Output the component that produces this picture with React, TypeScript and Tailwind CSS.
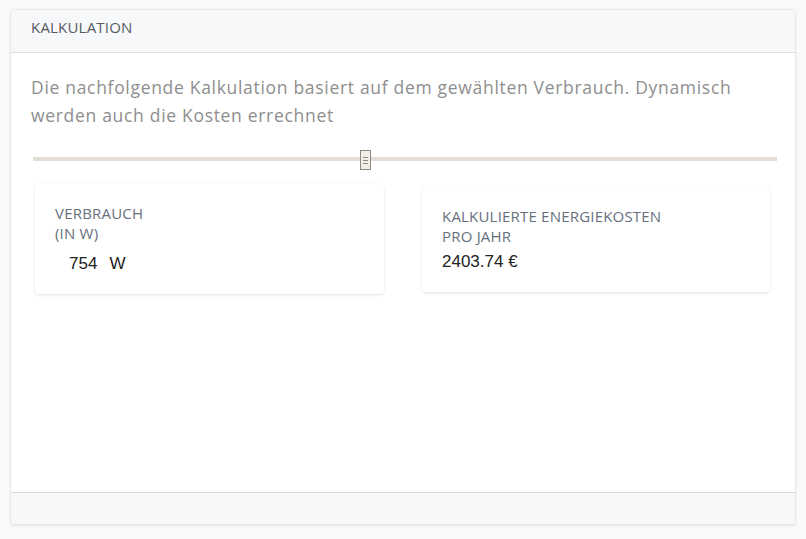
import React from 'react';

const SANS = "font-['Open_Sans',sans-serif]";
const NUM = "font-['Liberation_Sans',sans-serif]";

function StatCard({
  label,
  value,
  className,
}: {
  label: React.ReactNode;
  value: React.ReactNode;
  className?: string;
}) {
  return (
    <div
      className={`rounded-[4px] bg-white px-5 pt-[20px] shadow-[0_1px_3px_rgba(0,0,0,0.12)] ${className ?? ''}`}
    >
      <div className={`text-[15px] uppercase leading-[19.5px] tracking-[0.2px] text-[#66707c] ${SANS}`}>
        {label}
      </div>
      {value}
    </div>
  );
}

export default function App() {
  const consumption = 754;
  const yearly = 2403.74;

  return (
    <div className="min-h-[539px] bg-[#f9f9f9] px-[10px] pt-[9px]">
      <div className="flex h-[516px] flex-col overflow-hidden rounded-[4px] border border-[#e8e8e8] bg-white shadow-[0_1px_2px_rgba(0,0,0,0.08)]">
        <div className="flex h-[43px] items-start border-b border-[#dcdcdc] bg-[#f7f8fa] px-5 pt-[6px]">
          <span className={`text-[15px] leading-[22px] tracking-[0.2px] text-[#555a60] ${SANS}`}>
            KALKULATION
          </span>
        </div>

        <div className="flex-1 px-5 pt-[20px]">
          <p
            className={`max-w-[740px] text-[17.5px] leading-[28px] tracking-[0.69px] text-[#8e8e8e] ${SANS}`}
          >
            Die nachfolgende Kalkulation basiert auf dem gewählten Verbrauch. Dynamisch werden auch
            die Kosten errechnet
          </p>

          {/* range slider */}
          <div className="relative ml-[2px] mt-[21px] h-[20px] w-[744px]">
            <div className="absolute inset-x-0 top-[7px] h-[4px] bg-[#e3dfd8]" />
            <div className="absolute left-[327px] top-0 flex h-[20px] w-[11px] flex-col items-center justify-center gap-[2px] border border-[#8f8a84] bg-[#f0ede8]">
              <span className="h-px w-[5px] bg-[#8f8a84]" />
              <span className="h-px w-[5px] bg-[#8f8a84]" />
              <span className="h-px w-[5px] bg-[#8f8a84]" />
            </div>
          </div>

          <div className="mt-[14px] flex items-start">
            <StatCard
              className="ml-[4px] h-[110px] w-[349px]"
              label={
                <>
                  Verbrauch
                  <br />
                  (in W)
                </>
              }
              value={
                <div className={`mt-[11px] flex pl-[14px] text-[17px] leading-[20px] text-[#222] ${NUM}`}>
                  <span>{consumption}</span>
                  <span className="ml-[12px]">W</span>
                </div>
              }
            />
            <StatCard
              className="ml-[38px] mt-[3px] h-[105px] w-[348px]"
              label={
                <>
                  Kalkulierte Energiekosten
                  <br />
                  Pro Jahr
                </>
              }
              value={
                <div className={`mt-[6px] text-[17px] leading-[20px] text-[#222] ${NUM}`}>
                  {yearly.toFixed(2)} €
                </div>
              }
            />
          </div>
        </div>

        <div className="h-[32px] border-t border-[#d9d9d9] bg-[#f7f8fa]" />
      </div>
    </div>
  );
}
